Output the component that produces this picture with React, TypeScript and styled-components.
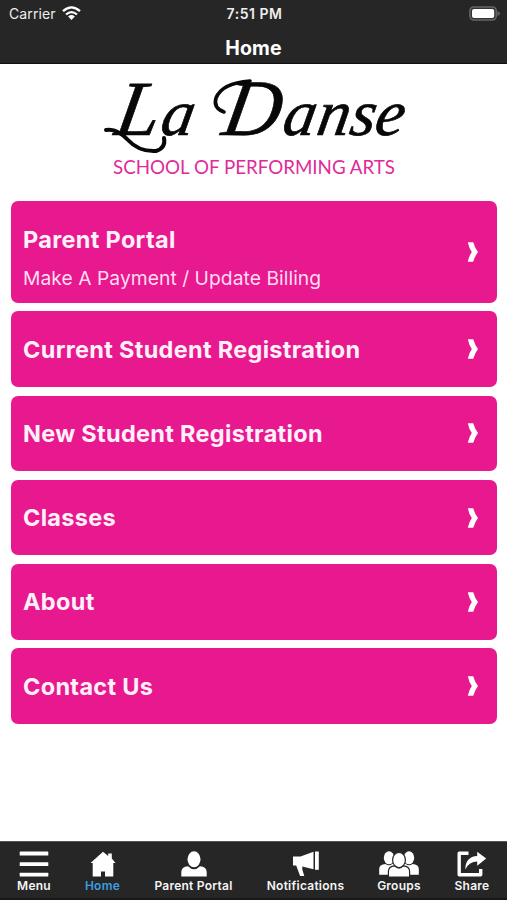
import React from 'react';
import styled, { createGlobalStyle } from 'styled-components';

const GlobalStyle = createGlobalStyle`
  * { box-sizing: border-box; }
  html, body, #root { margin: 0; height: 100%; }
  body { background: #fff; font-family: Inter, sans-serif; overflow: hidden; }
`;
const Screen = styled.div`
  width: 507px;
  height: 900px;
  display: flex;
  flex-direction: column;
  background: #fff;
`;
const Header = styled.header`
  height: 64px;
  flex: none;
  background: #262626;
  border-bottom: 1px solid #111;
  color: #fff;
`;
const StatusBar = styled.div`
  height: 27px;
  display: grid;
  grid-template-columns: 1fr auto 1fr;
  align-items: center;
  padding: 0 7px 0 9px;
  font-size: 14px;
  color: #eee;
`;
const Carrier = styled.div`
  display: flex;
  align-items: center;
  gap: 6px;
  letter-spacing: 0.1px;
`;
const Clock = styled.div`
  font-weight: 600;
  font-size: 14px;
  letter-spacing: 0.5px;
`;
const Battery = styled.div`
  display: flex;
  justify-content: flex-end;
`;
const Title = styled.h1`
  margin: 0;
  height: 43px;
  line-height: 43px;
  text-align: center;
  font-size: 19.5px;
  font-weight: 700;
  letter-spacing: 0.1px;
`;
const Logo = styled.svg`
  display: block;
  flex: none;
  width: 507px;
  height: 137px;
  overflow: visible;
`;
const Script = styled.text`
  font-family: "Liberation Serif", serif;
  font-style: italic;
  font-size: 65px;
  fill: #080808;
  stroke: #080808;
  stroke-width: 0.7px;
`;
const Tagline = styled.text`
  font-family: Lato, sans-serif;
  font-size: 20px;
  fill: #df2b99;
`;
const List = styled.main`
  flex: 1;
  display: flex;
  flex-direction: column;
  gap: 8.7px;
  padding: 0.3px 10.5px 0 11px;
`;
const Card = styled.a<{ $tall?: boolean }>`
  flex: none;
  height: ${(p) => (p.$tall ? 101.3 : 75.6)}px;
  display: flex;
  align-items: center;
  justify-content: space-between;
  padding: 0 18px 0 12px;
  border-radius: 7px;
  background: #e8188e;
  color: #fff0f9;
`;
const Labels = styled.div<{ $offset: number }>`
  display: flex;
  flex-direction: column;
  gap: 11px;
  padding-top: ${(p) => p.$offset}px;
`;
const CardTitle = styled.div`
  font-size: 23.5px;
  line-height: 28px;
  font-weight: 650;
  letter-spacing: 0.31px;
  white-space: nowrap;
`;
const CardSub = styled.div`
  font-size: 19.3px;
  line-height: 26px;
  letter-spacing: 0.03px;
  white-space: nowrap;
  color: #ffdcf1;
`;
const TabBar = styled.nav`
  flex: none;
  height: 59px;
  display: flex;
  background: #262626;
  border-top: 1px solid #555;
  border-bottom: 2px solid #171717;
`;
const Tab = styled.a<{ $width: number; $active?: boolean }>`
  width: ${(p) => p.$width}px;
  flex: none;
  display: flex;
  flex-direction: column;
  align-items: center;
  padding-top: 9px;
  font-size: 12px;
  line-height: 16px;
  font-weight: 600;
  letter-spacing: 0.25px;
  white-space: nowrap;
  color: ${(p) => (p.$active ? '#3b9ee0' : '#f4f4f4')};
  svg { display: block; flex: none; margin-bottom: 1px; }
`;

const WifiIcon = () => (
  <svg width="19" height="15" viewBox="0 0 19 15" fill="none" stroke="#fff" strokeWidth="2.3">
    <path d="M1 5.2Q9.5-2.5 18 5.2M4 8.5q5.5-4.8 11 0" />
    <path d="M6.1 10.4q3.4-2.7 6.8 0L9.5 14z" fill="#fff" stroke="none" />
  </svg>
);
const BatteryIcon = () => (
  <svg width="31" height="15" viewBox="0 0 31 15">
    <rect x=".9" y=".9" width="26.4" height="13.2" rx="4" fill="#333" stroke="#666" strokeWidth="1.5" />
    <rect x="3" y="3" width="22.2" height="9" rx="2" fill="#fff" />
    <path d="M28.5 5q2.5 1 2.5 2.5T28.5 10z" fill="#666" />
  </svg>
);
const Chevron = () => (
  <svg width="12" height="22" viewBox="0 0 12 22">
    <path d="M.8 1.2h5.4q1.8 6 4.8 9.8-3 3.8-4.8 9.8H.8Q2 15 4.8 11 2 7 .8 1.2z" fill="#fff" />
  </svg>
);

const MenuIcon = () => (
  <svg width="30" height="26" viewBox="0 0 30 26" fill="#fff">
    <rect x=".7" y=".6" width="28.6" height="3.8" rx=".5" />
    <rect x=".7" y="11.2" width="28.6" height="3.8" rx=".5" />
    <rect x=".7" y="21.7" width="28.6" height="3.8" rx=".5" />
  </svg>
);
const HomeIcon = () => (
  <svg width="26" height="26" viewBox="0 0 26 26" fill="#fff">
    <path d="M13 .8 18.2 5V2.5h3.6v5.1L25.5 12H23.3V25.5H15v-5h-4v5H2.7V12H.5z" />
  </svg>
);
const PersonIcon = () => (
  <svg width="26" height="26" viewBox="0 0 26 26" fill="#fff">
    <ellipse cx="13" cy="8.3" rx="6.5" ry="8" />
    <path d="M.3 25.4v-4.5Q.3 15.7 7 15.2Q13 21.2 19 15.2q6.7.5 6.7 5.7v4.5z" />
  </svg>
);
const HornIcon = () => (
  <svg width="28" height="26" viewBox="0 0 28 26" fill="#fff">
    <path d="M1 5.5h7.5L21.5.8v17.5L10.3 15.4v3l2 6.7H8.1L4.2 14.4H1z" />
    <path d="M23 .5h3.8v18.3H23z" />
  </svg>
);
const GroupIcon = () => (
  <svg width="40" height="26" viewBox="0 0 40 26" fill="#fff">
    <ellipse cx="10" cy="6.8" rx="5.2" ry="6.5" />
    <ellipse cx="30" cy="6.8" rx="5.2" ry="6.5" />
    <path d="M.2 23.8v-6q0-4.4 6.3-4.9Q10 16 13.8 12.5L16 14v9.8zM39.8 23.8v-6q0-4.4-6.3-4.9Q30 16 26.2 12.5L24 14v9.8z" />
    <g stroke="#262626" strokeWidth="1.2">
      <ellipse cx="20" cy="9" rx="6.4" ry="7.5" />
      <path d="M9.4 26v-5.5q0-5.2 6.3-5.6Q20 19.3 24.3 14.9q6.3.4 6.3 5.6V26z" />
    </g>
  </svg>
);
const ShareIcon = () => (
  <svg width="30" height="26" viewBox="0 0 30 26">
    <path d="M11.5 2.2H2.2V23.7H23.7V18" fill="none" stroke="#fff" strokeWidth="3.4" strokeLinejoin="round" />
    <path d="M8.2 18.5Q8.5 5.5 20.2 5V.8L29.2 7.5l-9 7.3v-4.3Q12.2 10.5 8.2 18.5z" fill="#fff" />
  </svg>
);

const items = [
  { title: 'Parent Portal', sub: 'Make A Payment / Update Billing' },
  { title: 'Current Student Registration' },
  { title: 'New Student Registration' },
  { title: 'Classes' },
  { title: 'About' },
  { title: 'Contact Us' },
];
const tabs = [
  { label: 'Menu', width: 68, Icon: MenuIcon },
  { label: 'Home', width: 69, Icon: HomeIcon, active: true },
  { label: 'Parent Portal', width: 113, Icon: PersonIcon },
  { label: 'Notifications', width: 111, Icon: HornIcon },
  { label: 'Groups', width: 76, Icon: GroupIcon },
  { label: 'Share', width: 70, Icon: ShareIcon },
];

export default function App() {
  return (
    <>
      <GlobalStyle />
      <Screen>
        <Header>
          <StatusBar>
            <Carrier>Carrier <WifiIcon /></Carrier>
            <Clock>7:51 PM</Clock>
            <Battery><BatteryIcon /></Battery>
          </StatusBar>
          <Title>Home</Title>
        </Header>
        <Logo viewBox="0 64 507 137">
          <g fill="none" stroke="#080808" strokeLinecap="round">
            <path d="M106 130Q117 128 128 140T156 151Q166 148 164 138" strokeWidth="4" />
            <path d="M224 112Q213 108 216 98Q222 83 250 81" strokeWidth="3.6" />
          </g>
          <Script transform="translate(0 135) skewX(-10)">
            <tspan x="113" fontSize="78">L</tspan>
            <tspan x="159">a</tspan>
            <tspan x="220" fontSize="80">D</tspan>
            <tspan x="281">a</tspan>
            <tspan x="315">n</tspan>
            <tspan x="348">s</tspan>
            <tspan x="373">e</tspan>
          </Script>
          <Tagline x="113" y="174" textLength="282" lengthAdjust="spacingAndGlyphs">SCHOOL OF PERFORMING ARTS</Tagline>
        </Logo>
        <List>
          {items.map((item) => (
            <Card key={item.title} $tall={!!item.sub}>
              <Labels $offset={item.sub ? 13 : 1}>
                <CardTitle>{item.title}</CardTitle>
                {item.sub && <CardSub>{item.sub}</CardSub>}
              </Labels>
              <Chevron />
            </Card>
          ))}
        </List>
        <TabBar>
          {tabs.map(({ label, width, Icon, active }) => (
            <Tab key={label} $width={width} $active={active}>
              <Icon />
              {label}
            </Tab>
          ))}
        </TabBar>
      </Screen>
    </>
  );
}
